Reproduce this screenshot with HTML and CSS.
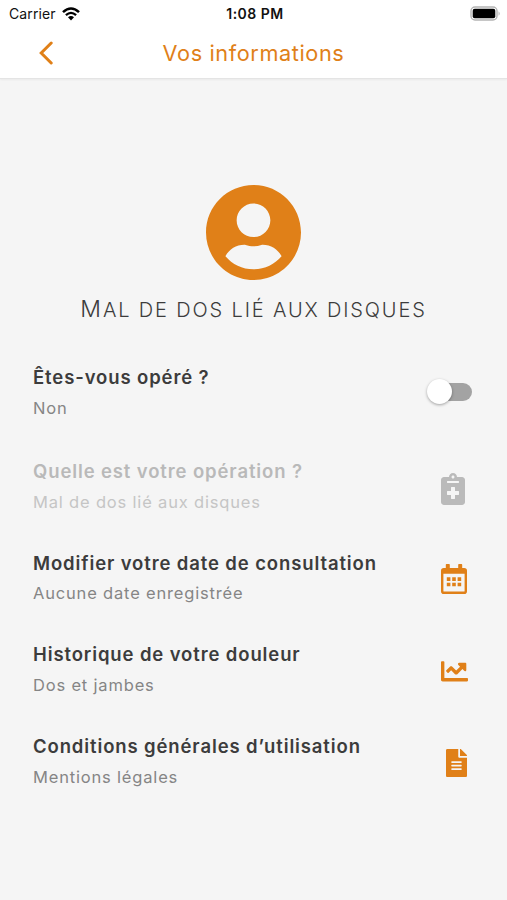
FILE: index.html
```html
<!DOCTYPE html>
<html lang="fr">
<head>
    <meta charset="UTF-8">
    <meta name="viewport" content="width=device-width, initial-scale=1.0">
    <title>Vos informations</title>
    <link rel="stylesheet" href="styles.css">
</head>
<body>
    <header class="header">
        <div class="status-bar">
            <div class="carrier">
                <span>Carrier</span>
                <svg class="wifi" viewBox="0 0 18 14" width="18" height="14">
                    <path d="M1 5.1Q9-2.1 17 5.1" fill="none" stroke="#000" stroke-width="2.6"/>
                    <path d="M3.9 8.2Q9 3.6 14.1 8.2" fill="none" stroke="#000" stroke-width="2.3"/>
                    <path d="M6 10.3Q9 7.6 12 10.3L9 13.5z" fill="#000"/>
                </svg>
            </div>
            <span class="time">1:08 PM</span>
            <svg class="battery" viewBox="0 0 31 15" width="31" height="15">
                <rect x="1" y="1" width="26" height="13" rx="4" fill="#fff" stroke="#b4b4b4" stroke-width="1.4"/>
                <rect x="2.7" y="2.7" width="22.6" height="9.6" rx="2" fill="#000"/>
                <path d="M28.6 5.2q2 2.3 0 4.6z" fill="#aaa"/>
            </svg>
        </div>
        <nav class="nav-bar">
            <a class="back" href="#" aria-label="Retour">
                <svg viewBox="0 0 14 24" width="14" height="24">
                    <path d="M12.2 2L2.2 12l10 10" fill="none" stroke="#e08018" stroke-width="3" stroke-linecap="round"/>
                </svg>
            </a>
            <h1>Vos informations</h1>
        </nav>
    </header>

    <main>
        <!-- Profile -->
        <section class="profile">
            <svg class="avatar" viewBox="0 8 496 496" width="95" height="95">
                <path d="M248 8C111 8 0 119 0 256s111 248 248 248 248-111 248-248S385 8 248 8zm0 96c48.6 0 88 39.4 88 88s-39.4 88-88 88-88-39.4-88-88 39.4-88 88-88zm0 344c-58.7 0-111.3-26.6-146.5-68.2 18.8-35.4 55.6-59.8 98.5-59.8 2.4 0 4.8.4 7.1 1.1 13 4.2 26.6 6.9 40.9 6.9 14.3 0 28-2.7 40.9-6.9 2.3-.7 4.7-1.1 7.1-1.1 42.9 0 79.7 24.4 98.5 59.8C359.3 421.4 306.7 448 248 448z"/>
            </svg>
            <h2>Mal de dos lié aux disques</h2>
        </section>

        <!-- Settings -->
        <ul class="settings">
            <li class="row first">
                <div class="text">
                    <h3>Êtes-vous opéré ?</h3>
                    <p>Non</p>
                </div>
                <span class="switch"><span class="knob"></span></span>
            </li>
            <li class="row disabled">
                <div class="text">
                    <h3>Quelle est votre opération ?</h3>
                    <p>Mal de dos lié aux disques</p>
                </div>
                <svg class="icon clipboard" viewBox="0 0 384 512" width="24" height="32">
                    <path d="M336 64h-80c0-35.300-28.700-64-64-64s-64 28.700-64 64H48C21.500 64 0 85.500 0 112v352c0 26.500 21.500 48 48 48h288c26.500 0 48-21.500 48-48V112c0-26.500-21.500-48-48-48zM192 40c13.300 0 24 10.700 24 24s-10.700 24-24 24-24-10.700-24-24 10.700-24 24-24zm96 304c0 4.400-3.600 8-8 8h-56v56c0 4.400-3.600 8-8 8h-48c-4.400 0-8-3.600-8-8v-56h-56c-4.400 0-8-3.600-8-8v-48c0-4.400 3.600-8 8-8h56v-56c0-4.400 3.600-8 8-8h48c4.400 0 8 3.600 8 8v56h56c4.400 0 8 3.600 8 8v48zm0-192c0 4.400-3.600 8-8 8H104c-4.400 0-8-3.600-8-8v-16c0-4.400 3.600-8 8-8h176c4.400 0 8 3.600 8 8v16z"/>
                </svg>
            </li>
            <li class="row">
                <div class="text">
                    <h3>Modifier votre date de consultation</h3>
                    <p>Aucune date enregistrée</p>
                </div>
                <svg class="icon calendar" viewBox="0 0 26 30" width="26" height="30">
                    <path fill-rule="evenodd" d="M5.500 0h2.600q.7 0 .7.700v3.300h8.400V.7q0-.7.700-.7h2.600q.7 0 .7.700V4h2q2.800 0 2.800 2.800v20.400q0 2.800-2.800 2.800H2.800Q0 30 0 27.200V6.800Q0 4 2.800 4h2V.7q0-.7.700-.7zM2.400 9.800v17.100q0 .7.700.7h19.800q.7 0 .7-.7V9.800z"/>
                    <path d="M5.800 13.300h3.600v3.600H5.800zM11.200 13.300h3.600v3.600h-3.600zM16.600 13.300h3.600v3.600h-3.600zM5.800 18.700h3.600v3.600H5.800zM11.200 18.700h3.600v3.600h-3.600zM16.600 18.700h3.600v3.600h-3.600z"/>
                </svg>
            </li>
            <li class="row">
                <div class="text">
                    <h3>Historique de votre douleur</h3>
                    <p>Dos et jambes</p>
                </div>
                <svg class="icon chart" viewBox="0 64 512 384" width="27" height="20.500">
                    <path d="M496 384H64V80c0-8.840-7.160-16-16-16H16C7.160 64 0 71.160 0 80v336c0 17.670 14.330 32 32 32h464c8.840 0 16-7.160 16-16v-32c0-8.840-7.160-16-16-16zM464 96H345.940c-21.380 0-32.090 25.850-16.970 40.970l32.400 32.400L288 242.750l-73.370-73.370c-12.500-12.500-32.760-12.500-45.250 0l-68.690 68.690c-6.250 6.250-6.250 16.380 0 22.630l22.620 22.620c6.250 6.250 16.380 6.250 22.630 0L192 237.250l73.370 73.370c12.500 12.500 32.760 12.500 45.250 0l96-96 32.400 32.400c15.120 15.120 40.970 4.410 40.970-16.970V112c.01-8.840-7.150-16-15.990-16z"/>
                </svg>
            </li>
            <li class="row">
                <div class="text">
                    <h3>Conditions générales d’utilisation</h3>
                    <p>Mentions légales</p>
                </div>
                <svg class="icon file" viewBox="0 0 384 512" width="21" height="28">
                    <path d="M224 136V0H24C10.700 0 0 10.700 0 24v464c0 13.300 10.700 24 24 24h336c13.300 0 24-10.700 24-24V160H248c-13.200 0-24-10.800-24-24zm64 236c0 6.600-5.400 12-12 12H108c-6.600 0-12-5.400-12-12v-8c0-6.600 5.400-12 12-12h168c6.600 0 12 5.400 12 12v8zm0-64c0 6.600-5.400 12-12 12H108c-6.600 0-12-5.400-12-12v-8c0-6.600 5.400-12 12-12h168c6.600 0 12 5.400 12 12v8zm0-72v8c0 6.600-5.400 12-12 12H108c-6.600 0-12-5.400-12-12v-8c0-6.600 5.400-12 12-12h168c6.600 0 12 5.400 12 12zm96-114.100v6.100H256V0h6.100c6.400 0 12.500 2.500 17 7l97.900 98c4.500 4.500 7 10.600 7 16.900z"/>
                </svg>
            </li>
        </ul>
    </main>
</body>
</html>
```

FILE: styles.css
```css
* {
    box-sizing: border-box;
}
body {
    margin: 0;
    height: 900px;
    overflow: hidden;
    background-color: #f5f5f5;
    color: #3c3c3c;
    font-family: Inter, "Liberation Sans", sans-serif;
}
h1, h2, h3, p, ul {
    margin: 0;
    padding: 0;
    font-weight: normal;
}

/* Header */
.header {
    height: 79px;
    background-color: #fff;
    border-bottom: 1px solid #e4e4e4;
    box-shadow: 0 1px 2px rgba(0, 0, 0, 0.05);
}
.status-bar {
    display: grid;
    grid-template-columns: 1fr auto 1fr;
    align-items: center;
    height: 27px;
    padding: 0 6px 0 9px;
    color: #111;
}
.carrier {
    display: flex;
    align-items: center;
    gap: 6px;
    font-size: 14px;
    letter-spacing: 0.1px;
}
.time {
    font-size: 14px;
    font-weight: 600;
    letter-spacing: 0.5px;
}
.battery {
    justify-self: end;
}
.nav-bar {
    display: grid;
    grid-template-columns: 60px 1fr 60px;
    align-items: center;
    height: 51px;
}
.back {
    display: flex;
    justify-content: flex-end;
    padding-right: 7px;
}
h1 {
    text-align: center;
    color: #e08018;
    font-size: 21.7px;
    letter-spacing: 0.6px;
}

/* Profile */
.profile {
    display: flex;
    flex-direction: column;
    align-items: center;
    padding-top: 106px;
}
.avatar {
    fill: #e08018;
}
h2 {
    margin-top: 15px;
    font-size: 20px;
    line-height: 28px;
    font-weight: 300;
    letter-spacing: 1.85px;
    text-transform: uppercase;
}
h2::first-letter {
    font-size: 23px;
}

/* Settings list */
.settings {
    list-style: none;
    padding: 40px 35px 0 33px;
}
.row {
    display: flex;
    justify-content: space-between;
    height: 91.7px;
}
.first {
    height: 94px;
}
h3 {
    font-size: 18.5px;
    line-height: 26px;
    font-weight: 600;
    letter-spacing: 0.88px;
}
.row p {
    margin-top: 5.5px;
    color: #858585;
    font-size: 16.5px;
    line-height: 24px;
    letter-spacing: 0.82px;
}
.icon {
    margin-top: 14.5px;
    margin-right: 5px;
    fill: #e08018;
}
.disabled h3 {
    color: #b9b9b9;
}
.disabled p {
    color: #c5c5c5;
}
.clipboard {
    margin-right: 7px;
    fill: #bababa;
}
.chart {
    margin-top: 20px;
    margin-right: 4px;
}
.file {
    margin-top: 16px;
}

/* Toggle */
.switch {
    display: flex;
    align-items: center;
    width: 40px;
    height: 18px;
    margin: 18.5px 0 0;
    background: linear-gradient(#a3a3a3, #a3a3a3) right / 36px 100% no-repeat;
    border-radius: 9px;
}
.knob {
    flex: none;
    width: 25px;
    height: 25px;
    margin-left: -5px;
    background-color: #fff;
    border-radius: 50%;
    box-shadow: 0 1px 3px rgba(0, 0, 0, 0.35);
}
```
